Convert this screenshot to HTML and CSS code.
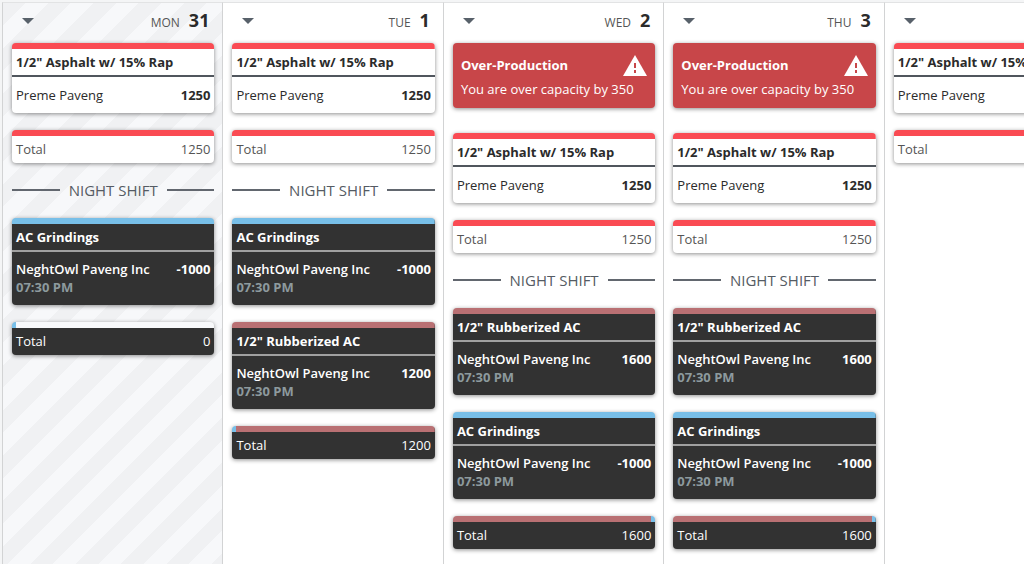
FILE: index.html
```html
<!DOCTYPE html>
<html lang="en">
<head>
<meta charset="utf-8">
<title>Production Schedule</title>
<meta name="viewport" content="width=device-width, initial-scale=1">
<link rel="stylesheet" href="styles.css">
</head>
<body>
<main class="board">
  <section class="day day-past">
    <header class="day-head">
      <button class="toggle" type="button" aria-label="Day menu"><svg class="caret" viewBox="0 0 12 6"><path d="M0 0h12L6 6z"/></svg></button>
      <h2 class="date"><span class="dow">MON</span>31</h2>
    </header>
    <div class="shift">
      <article class="card red">
        <h3 class="mix">1/2" Asphalt w/ 15% Rap</h3>
        <div class="order"><p class="row"><span>Preme Paveng</span><b>1250</b></p></div>
      </article>
      <p class="card total red"><span>Total</span><span>1250</span></p>
    </div>
    <h3 class="divider">NIGHT SHIFT</h3>
    <div class="shift">
      <article class="card night blue">
        <h3 class="mix">AC Grindings</h3>
        <div class="order"><p class="row"><span>NeghtOwl Paveng Inc</span><b>-1000</b></p><time class="time">07:30 PM</time></div>
      </article>
      <p class="card night total empty"><span>Total</span><span>0</span></p>
    </div>
  </section>

  <section class="day">
    <header class="day-head">
      <button class="toggle" type="button" aria-label="Day menu"><svg class="caret" viewBox="0 0 12 6"><path d="M0 0h12L6 6z"/></svg></button>
      <h2 class="date"><span class="dow">TUE</span>1</h2>
    </header>
    <div class="shift">
      <article class="card red">
        <h3 class="mix">1/2" Asphalt w/ 15% Rap</h3>
        <div class="order"><p class="row"><span>Preme Paveng</span><b>1250</b></p></div>
      </article>
      <p class="card total red"><span>Total</span><span>1250</span></p>
    </div>
    <h3 class="divider">NIGHT SHIFT</h3>
    <div class="shift">
      <article class="card night blue">
        <h3 class="mix">AC Grindings</h3>
        <div class="order"><p class="row"><span>NeghtOwl Paveng Inc</span><b>-1000</b></p><time class="time">07:30 PM</time></div>
      </article>
      <article class="card night rose">
        <h3 class="mix">1/2" Rubberized AC</h3>
        <div class="order"><p class="row"><span>NeghtOwl Paveng Inc</span><b>1200</b></p><time class="time">07:30 PM</time></div>
      </article>
      <p class="card night total blue-rose"><span>Total</span><span>1200</span></p>
    </div>
  </section>

  <section class="day">
    <header class="day-head">
      <button class="toggle" type="button" aria-label="Day menu"><svg class="caret" viewBox="0 0 12 6"><path d="M0 0h12L6 6z"/></svg></button>
      <h2 class="date"><span class="dow">WED</span>2</h2>
    </header>
    <div class="alert" role="alert">
      <p class="alert-head"><strong>Over-Production</strong><svg class="warn" viewBox="0 0 24 21"><path fill="#fff" d="M12 0L24 21H0z"/><path fill="#c84649" d="M11 8h2v5h-2zM11 15h2v3h-2z"/></svg></p>
      <p class="alert-text">You are over capacity by 350</p>
    </div>
    <div class="shift">
      <article class="card red">
        <h3 class="mix">1/2" Asphalt w/ 15% Rap</h3>
        <div class="order"><p class="row"><span>Preme Paveng</span><b>1250</b></p></div>
      </article>
      <p class="card total red"><span>Total</span><span>1250</span></p>
    </div>
    <h3 class="divider">NIGHT SHIFT</h3>
    <div class="shift">
      <article class="card night rose">
        <h3 class="mix">1/2" Rubberized AC</h3>
        <div class="order"><p class="row"><span>NeghtOwl Paveng Inc</span><b>1600</b></p><time class="time">07:30 PM</time></div>
      </article>
      <article class="card night blue">
        <h3 class="mix">AC Grindings</h3>
        <div class="order"><p class="row"><span>NeghtOwl Paveng Inc</span><b>-1000</b></p><time class="time">07:30 PM</time></div>
      </article>
      <p class="card night total rose-blue"><span>Total</span><span>1600</span></p>
    </div>
  </section>

  <section class="day">
    <header class="day-head">
      <button class="toggle" type="button" aria-label="Day menu"><svg class="caret" viewBox="0 0 12 6"><path d="M0 0h12L6 6z"/></svg></button>
      <h2 class="date"><span class="dow">THU</span>3</h2>
    </header>
    <div class="alert" role="alert">
      <p class="alert-head"><strong>Over-Production</strong><svg class="warn" viewBox="0 0 24 21"><path fill="#fff" d="M12 0L24 21H0z"/><path fill="#c84649" d="M11 8h2v5h-2zM11 15h2v3h-2z"/></svg></p>
      <p class="alert-text">You are over capacity by 350</p>
    </div>
    <div class="shift">
      <article class="card red">
        <h3 class="mix">1/2" Asphalt w/ 15% Rap</h3>
        <div class="order"><p class="row"><span>Preme Paveng</span><b>1250</b></p></div>
      </article>
      <p class="card total red"><span>Total</span><span>1250</span></p>
    </div>
    <h3 class="divider">NIGHT SHIFT</h3>
    <div class="shift">
      <article class="card night rose">
        <h3 class="mix">1/2" Rubberized AC</h3>
        <div class="order"><p class="row"><span>NeghtOwl Paveng Inc</span><b>1600</b></p><time class="time">07:30 PM</time></div>
      </article>
      <article class="card night blue">
        <h3 class="mix">AC Grindings</h3>
        <div class="order"><p class="row"><span>NeghtOwl Paveng Inc</span><b>-1000</b></p><time class="time">07:30 PM</time></div>
      </article>
      <p class="card night total rose-blue"><span>Total</span><span>1600</span></p>
    </div>
  </section>

  <section class="day">
    <header class="day-head">
      <button class="toggle" type="button" aria-label="Day menu"><svg class="caret" viewBox="0 0 12 6"><path d="M0 0h12L6 6z"/></svg></button>
    </header>
    <div class="shift">
      <article class="card red">
        <h3 class="mix">1/2" Asphalt w/ 15% Rap</h3>
        <div class="order"><p class="row"><span>Preme Paveng</span></p></div>
      </article>
      <p class="card total red"><span>Total</span></p>
    </div>
  </section>
</main>
</body>
</html>
```

FILE: styles.css
```css
* {
  box-sizing: border-box;
}

html {
  height: 100%;
}

body {
  margin: 0;
  min-height: 100%;
  display: flex;
  background: #f4f5f6;
  color: #2b2b2b;
  font: 13px/18px "Open Sans", "Noto Sans", sans-serif;
  overflow: hidden;
}

h2, h3, p {
  margin: 0;
  font-size: inherit;
}

b, strong {
  font-weight: 700;
}

.board {
  flex: 1;
  min-width: 0;
  display: grid;
  grid-auto-flow: column;
  grid-auto-columns: 21.57%;
  padding: 2px 0 0 2px;
}

.day {
  padding: 0 8px 14px 9px;
  border-top: 1px solid #e2e3e4;
  border-left: 1px solid #d2d3d4;
  background: #fff;
}

.day-past {
  background: repeating-linear-gradient(135deg, #f0f1f3 0 16px, #f7f8fa 16px 32px);
}

.day-head {
  display: flex;
  align-items: center;
  justify-content: space-between;
  height: 40px;
  padding: 0 5px 4px 0;
}

.toggle {
  display: flex;
  padding: 8px 10px;
  border: 0;
  background: none;
}

.caret {
  width: 12px;
  height: 6px;
  fill: #58616a;
}

.date {
  font-size: 18px;
  font-weight: 700;
}

.dow {
  margin-right: 9px;
  color: #555;
  font-size: 12px;
  font-weight: 400;
}

.shift {
  display: grid;
  gap: 17px;
}

.card {
  --bar: #fa4b53;
  overflow: hidden;
  border-radius: 4px;
  background: linear-gradient(var(--bar), var(--bar)) top / 100% 6px no-repeat #fff;
  box-shadow: 0 1px 4px rgba(0, 0, 0, .45);
  padding-top: 6px;
}

.night {
  background-color: #323232;
  color: #fff;
}

.blue {
  --bar: #78bfe8;
}

.rose {
  --bar: #b97073;
}

.empty {
  background-image: linear-gradient(90deg, #78bfe8 4px, #f8f9fb 4px);
}

.blue-rose {
  background-image: linear-gradient(90deg, #78bfe8 4px, #b97073 4px);
}

.rose-blue {
  background-image: linear-gradient(270deg, #78bfe8 4px, #b97073 4px);
}

.mix {
  padding: 4px;
  border-bottom: 2px solid #50565d;
  font-weight: 700;
}

.night .mix {
  border-color: #a0a0a0;
}

.order {
  padding: 9px 4px;
  font-weight: 500;
}

.night .order {
  padding: 8px 4px 9px;
  font-weight: 600;
}

.row {
  display: flex;
  justify-content: space-between;
}

.time {
  display: block;
  color: #8d9a9e;
  font-weight: 700;
}

.total {
  display: flex;
  justify-content: space-between;
  padding: 10px 4px 5px;
  color: #555;
}

.night.total {
  color: #fff;
}

.divider {
  display: flex;
  align-items: center;
  gap: 9px;
  margin: 17px 0 18px;
  color: #555b63;
  font-size: 15px;
  font-weight: 500;
  line-height: 20px;
}

.divider::before,
.divider::after {
  content: "";
  flex: 1;
  height: 2px;
  background: #62676f;
}

.alert {
  margin-bottom: 25px;
  padding: 11px 8px 7px;
  border-radius: 4px;
  background: #c84649;
  box-shadow: 0 1px 4px rgba(0, 0, 0, .45);
  color: #fff;
}

.alert-head {
  display: flex;
  justify-content: space-between;
  align-items: center;
  line-height: 22px;
}

.alert-text {
  margin-top: 1px;
  line-height: 24px;
}

.warn {
  width: 24px;
  height: 21px;
}
```
